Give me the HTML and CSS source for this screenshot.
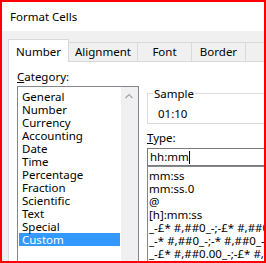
FILE: index.html
```html
<!DOCTYPE html>
<html lang="en">
<head>
    <meta charset="UTF-8">
    <meta name="viewport" content="width=device-width, initial-scale=1.0">
    <title>Format Cells</title>
    <link rel="stylesheet" href="styles.css">
</head>
<body>
    <div class="dialog">
        <div class="titlebar">Format Cells</div>
        <div class="tabs">
            <div class="tab active">Number</div>
            <div class="tab alignment">Alignment</div>
            <div class="tab font">Font</div>
            <div class="tab border">Border</div>
            <div class="tab fill"></div>
        </div>
        <div class="panel">
            <div class="left">
                <div class="label"><u>C</u>ategory:</div>
                <div class="listbox">
                    <ul class="items">
                        <li>General</li>
                        <li>Number</li>
                        <li>Currency</li>
                        <li>Accounting</li>
                        <li>Date</li>
                        <li>Time</li>
                        <li>Percentage</li>
                        <li>Fraction</li>
                        <li>Scientific</li>
                        <li>Text</li>
                        <li>Special</li>
                        <li class="selected">Custom</li>
                    </ul>
                    <div class="scrollbar">
                        <svg width="17" height="17" viewBox="0 0 17 17">
                            <polyline points="4.5,11 8,7.5 11.5,11" fill="none" stroke="#a6a6a6" stroke-width="1.2"/>
                        </svg>
                    </div>
                </div>
            </div>
            <div class="right">
                <fieldset class="sample">
                    <legend>Sample</legend>
                    <div class="sample-value">01:10</div>
                </fieldset>
                <div class="label type-label"><u>T</u>ype:</div>
                <div class="input">hh:mm<span class="caret"></span></div>
                <ul class="typelist">
                    <li>mm:ss</li>
                    <li>mm:ss.0</li>
                    <li>@</li>
                    <li>[h]:mm:ss</li>
                    <li>_-£* #,##0_-;-£* #,##0_-;_-£* "-"_-;_-@_-</li>
                    <li>_-* #,##0_-;-* #,##0_-;_-* "-"_-;_-@_-</li>
                    <li>_-£* #,##0.00_-;-£* #,##0.00_-;_-£* "-"??_-;_-@_-</li>
                    <li>_-* #,##0.00_-;-* #,##0.00_-;_-* "-"??_-;_-@_-</li>
                </ul>
            </div>
        </div>
    </div>
</body>
</html>
```

FILE: styles.css
```css
body {
    margin: 0;
    font-family: "Noto Sans", sans-serif;
    font-size: 11.5px;
    color: #000;
}
ul {
    list-style: none;
    margin: 0;
    padding: 0;
}
.dialog {
    width: 266px;
    height: 263px;
    box-sizing: border-box;
    border: 2px solid #ff0000;
    background: #f0f0f0;
    overflow: hidden;
    display: flex;
    flex-direction: column;
}
.titlebar {
    height: 29px;
    line-height: 29px;
    padding-left: 8px;
    background: #fff;
    flex-shrink: 0;
}
.tabs {
    display: flex;
    align-items: flex-end;
    height: 22px;
    margin-top: 8px;
    padding-left: 6px;
    flex-shrink: 0;
}
.tab {
    box-sizing: border-box;
    height: 19px;
    padding-top: 1px;
    line-height: 15px;
    text-align: center;
    background: #f0f0f0;
    border: 1px solid #d9d9d9;
    border-bottom: none;
    margin-left: -1px;
    white-space: nowrap;
    flex-shrink: 0;
}
.tab.active {
    position: relative;
    z-index: 1;
    width: 61px;
    height: 23px;
    padding-top: 4px;
    margin-left: 0;
    margin-bottom: -1px;
    background: #fff;
}
.tab.alignment {
    width: 70px;
}
.tab.font {
    width: 55px;
}
.tab.border {
    width: 55px;
}
.tab.fill {
    width: 50px;
}
.panel {
    flex: 1;
    display: flex;
    gap: 8px;
    margin-left: 6px;
    margin-right: -40px;
    padding: 7px 0 0 8px;
    background: #fff;
    border: 1px solid #d9d9d9;
}
.left {
    width: 122px;
    flex-shrink: 0;
}
.label {
    line-height: 15px;
    margin-bottom: 2px;
}
.listbox {
    display: flex;
    height: 200px;
    border: 1px solid #828790;
}
.items {
    flex: 1;
    padding: 3px 1px 0 1px;
}
.items li {
    height: 13px;
    line-height: 13px;
    padding-left: 3px;
}
.items li.selected {
    background: #3399ff;
    color: #fff;
}
.scrollbar {
    width: 17px;
    background: #f0f0f0;
}
.scrollbar svg {
    display: block;
}
.right {
    flex: 1;
    padding-top: 17px;
}
.sample {
    margin: 0;
    padding: 5px 0 2px 5px;
    border: 1px solid #dcdcdc;
}
.sample legend {
    padding: 0 1px;
    line-height: 15px;
}
.sample-value {
    line-height: 15px;
    padding-left: 5px;
}
.type-label {
    margin-top: 6px;
    margin-bottom: 3px;
}
.input {
    box-sizing: border-box;
    height: 18px;
    line-height: 16px;
    padding-left: 2px;
    border: 1px solid #7a7a7a;
}
.caret {
    display: inline-block;
    width: 1px;
    height: 13px;
    background: #000;
    vertical-align: -3px;
}
.typelist {
    height: 120px;
    padding: 2px 0 0 1px;
    border: 1px solid #828790;
}
.typelist li {
    height: 13px;
    line-height: 13px;
    white-space: nowrap;
}
```
